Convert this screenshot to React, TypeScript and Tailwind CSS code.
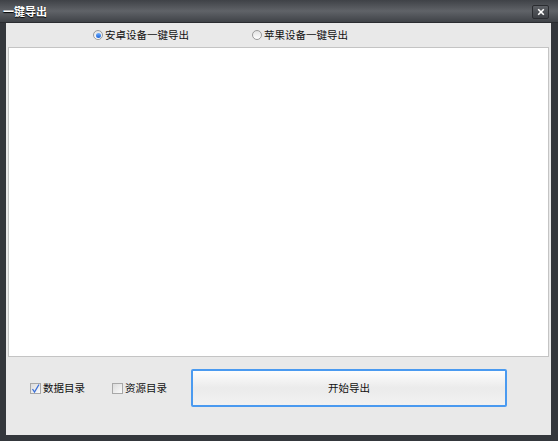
import React from "react";

const cjk = {
  fontFamily: '"Noto Sans CJK SC", "Noto Sans", sans-serif',
};

function Radio({ checked, label }: { checked: boolean; label: string }) {
  return (
    <label className="flex items-center gap-[2px] text-[10.5px] text-[#111]">
      <span className="flex h-[10px] w-[10px] items-center justify-center rounded-full border border-[#9a9a9a] bg-gradient-to-b from-[#e2e2e2] to-[#ffffff]">
        {checked && (
          <span className="h-[5px] w-[5px] rounded-full bg-gradient-to-b from-[#6fb0ff] to-[#1b62d8]" />
        )}
      </span>
      <span>{label}</span>
    </label>
  );
}

function Check({ checked, label }: { checked: boolean; label: string }) {
  return (
    <label className="flex items-center gap-[2px] text-[10.5px] text-[#111]">
      <span className="relative flex h-[11px] w-[11px] items-center justify-center border border-[#a8a8a8] bg-gradient-to-br from-[#dcdcdc] to-[#fafafa]">
        {checked && (
          <svg viewBox="0 0 11 11" className="absolute h-[11px] w-[11px]">
            <path
              d="M2.5 6 L4.5 9 L9 1.5"
              fill="none"
              stroke="#3a6fd8"
              strokeWidth="1.3"
            />
          </svg>
        )}
      </span>
      <span>{label}</span>
    </label>
  );
}

export default function App() {
  return (
    <div
      className="flex h-[441px] w-[558px] flex-col bg-[#34373c]"
      style={cjk}
    >
      <div className="flex h-[23px] items-center justify-between border-b border-[#2a2c30] bg-gradient-to-b from-[#3f4247] via-[#606368] to-[#404348] pl-[3px] pr-[9px]">
        <span className="text-[11px] font-bold text-white [text-shadow:0_1px_1px_#000]">
          一键导出
        </span>
        <button className="mt-[2px] flex h-[14px] w-[17px] items-center justify-center rounded-[2px] border border-[#2a2c30] bg-gradient-to-b from-[#5e6166] to-[#3d4045]">
          <svg viewBox="0 0 10 10" className="h-[8px] w-[8px]">
            <path
              d="M1.5 1.5 L8.5 8.5 M8.5 1.5 L1.5 8.5"
              stroke="#ffffff"
              strokeWidth="2"
            />
          </svg>
        </button>
      </div>
      <div className="mb-[6px] ml-[6px] mr-[7px] flex flex-1 flex-col bg-[#e9e9e9]">
        <div className="flex h-[24px] items-center">
          <div className="ml-[87px] w-[159px]">
            <Radio checked label="安卓设备一键导出" />
          </div>
          <Radio checked={false} label="苹果设备一键导出" />
        </div>
        <div className="mx-[2px] h-[310px] border border-[#c4c4c4] bg-white" />
        <div className="flex h-[38px] items-center mt-[12px]">
          <div className="ml-[24px] w-[82px]">
            <Check checked label="数据目录" />
          </div>
          <Check checked={false} label="资源目录" />
          <button className="ml-[24px] flex h-[38px] w-[316px] items-center justify-center rounded-[2px] border-2 border-[#4a9af0] bg-gradient-to-b from-[#fdfdfd] via-[#ebebeb] to-[#f2f2f2] text-[10.5px] text-[#111]">
            开始导出
          </button>
        </div>
      </div>
    </div>
  );
}
